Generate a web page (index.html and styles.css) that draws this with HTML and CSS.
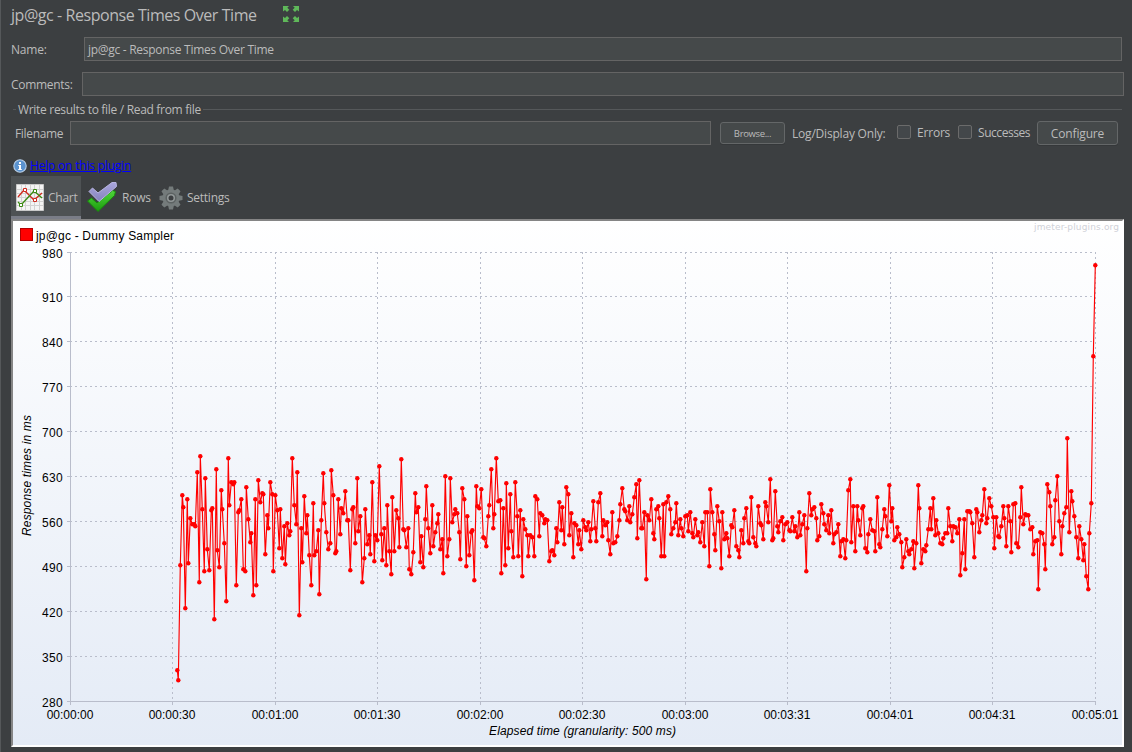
FILE: index.html
```
<!DOCTYPE html>
<html lang="en">
<head>
  <meta charset="UTF-8">
  <title>jp@gc - Response Times Over Time</title>
  <link rel="stylesheet" href="styles.css">
</head>
<body>
<div class="panel">
  <div class="title">
    <h1>jp@gc - Response Times Over Time</h1>
    <svg class="expand" width="18" height="18" viewBox="0 0 18 18">
      <g fill="#5fb85a">
        <path id="arrow" d="M1 1h6L5.300 2.700 7.300 4.700 5 7 3 5 1 6.500z"/>
        <use href="#arrow" transform="matrix(-1 0 0 1 18 0)"/>
        <use href="#arrow" transform="matrix(1 0 0 -1 0 18)"/>
        <use href="#arrow" transform="matrix(-1 0 0 -1 18 18)"/>
      </g>
    </svg>
  </div>

  <div class="row name">
    <label>Name:</label>
    <div class="field">jp@gc - Response Times Over Time</div>
  </div>
  <div class="row comments">
    <label>Comments:</label>
    <div class="field"></div>
  </div>

  <div class="legend"><span>Write results to file / Read from file</span></div>

  <div class="row file">
    <label>Filename</label>
    <div class="field"></div>
    <button class="browse">Browse...</button>
    <span class="only">Log/Display Only:</span>
    <i class="check"></i><span class="errors">Errors</span>
    <i class="check"></i><span class="successes">Successes</span>
    <button class="configure">Configure</button>
  </div>

  <div class="help">
    <svg width="14" height="14" viewBox="0 0 14 14">
      <circle cx="7" cy="7" r="6.200" fill="#5b93cf" stroke="#b9cfe6" stroke-width="1.100"/>
      <path d="M6 3h2v2H6zM5.300 6H8v4h.8v1H5.200v-1H6V7h-.7z" fill="#fff"/>
    </svg>
    <a href="#">Help on this plugin</a>
  </div>

  <div class="tabs">
    <div class="tab active">
      <svg width="28" height="28" viewBox="0 0 28 28">
        <path fill="#f4f4f4" stroke="#c9c9c9" d="M.5 1.500h27v26H.5z"/>
        <path fill="none" stroke="#d2d2d2" d="M5.500 2v25M9.500 2v25M14.500 2v25M18.500 2v25M23.500 2v25M1 6.500h26M1 10.500h26M1 14.500h26M1 18.500h26M1 22.500h26"/>
        <path fill="none" stroke="#cf2a1e" stroke-width="1.300" d="M2 14l6-7 10 10 8-7"/>
        <path fill="none" stroke="#3a8a12" stroke-width="1.300" d="M2 19l3 3L18 8l8 7"/>
        <path fill="#fff" stroke="#cf2a1e" d="M7.500 5.500h3v3h-3zM17.500 15.500h3v3h-3z"/>
        <path fill="#fff" stroke="#3a8a12" d="M3.500 20.500h3v3h-3zM17.500 6.500h3v3h-3z"/>
      </svg>
      <span>Chart</span>
    </div>
    <div class="tab rows">
      <svg width="32" height="32" viewBox="0 0 32 32">
        <defs>
          <linearGradient id="green" x1="0" y1="0" x2="0" y2="1">
            <stop offset="0" stop-color="#4fd63a"/><stop offset="1" stop-color="#1b9a0e"/>
          </linearGradient>
          <linearGradient id="violet" x1="0" y1="0" x2="0" y2="1">
            <stop offset="0" stop-color="#a9a6dc"/><stop offset="1" stop-color="#8582bd"/>
          </linearGradient>
        </defs>
        <path d="M1.500 20l4-3 5.500 5L26.500 9.500l3 1-1 4L12 30.500z" fill="url(#green)" stroke="#178a0c"/>
        <path d="M3 10.500L6.500 7l5.500 5L26 1.500h4l.5 4L13 20.500z" fill="url(#violet)" stroke="#b9b6e2"/>
      </svg>
      <span>Rows</span>
    </div>
    <div class="tab settings">
      <svg width="24" height="24" viewBox="-12 -12 24 24">
        <g fill="#747b7b">
          <path id="teeth" d="M-2-11.500h4L3-7h-6zM-2 11.500h4L3 7h-6z"/>
          <use href="#teeth" transform="rotate(45)"/>
          <use href="#teeth" transform="rotate(90)"/>
          <use href="#teeth" transform="rotate(135)"/>
          <circle r="8.500"/>
        </g>
        <circle r="4.800" fill="#929898" stroke="#5c6262" stroke-width="1.500"/>
        <circle r="2.500" fill="#3c3f41"/>
      </svg>
      <span>Settings</span>
    </div>
  </div>

  <div class="chart">
    <svg width="1110" height="524" viewBox="13 221 1110 524">
      <defs>
        <marker id="dot" markerUnits="userSpaceOnUse" markerWidth="6" markerHeight="6" refX="3" refY="3">
          <circle cx="3" cy="3" r="2.200" fill="#f00"/>
        </marker>
      </defs>

      <rect class="key" x="20.500" y="228.500" width="12" height="12"/>
      <text x="36" y="240" textLength="138">jp@gc - Dummy Sampler</text>
      <text class="mark" x="1034" y="230" textLength="85">jmeter-plugins.org</text>

      <path class="grid" d="M70 252.500H1095M70 296.500H1095M70 341.500H1095M70 386.500H1095M70 431.500H1095M70 476.500H1095M70 521.500H1095M70 566.500H1095M70 611.500H1095M70 656.500H1095"/>
      <path class="grid" d="M172.500 252V701M275.500 252V701M377.500 252V701M480.500 252V701M582.500 252V701M685.500 252V701M787.500 252V701M890.500 252V701M992.500 252V701M1095.500 252V701"/>
      <path class="axis" d="M70.500 252V705M67 701.500H1096M67 252.500h3M67 296.500h3M67 341.500h3M67 386.500h3M67 431.500h3M67 476.500h3M67 521.500h3M67 566.500h3M67 611.500h3M67 656.500h3M172.500 702v3M275.500 702v3M377.500 702v3M480.500 702v3M582.500 702v3M685.500 702v3M787.500 702v3M890.500 702v3M992.500 702v3M1095.500 702v3"/>

      <g class="ylabels">
        <text x="63" y="258">980</text>
        <text x="63" y="302">910</text>
        <text x="63" y="347">840</text>
        <text x="63" y="392">770</text>
        <text x="63" y="437">700</text>
        <text x="63" y="482">630</text>
        <text x="63" y="527">560</text>
        <text x="63" y="572">490</text>
        <text x="63" y="617">420</text>
        <text x="63" y="662">350</text>
        <text x="63" y="707">280</text>
      </g>
      <g class="xlabels">
        <text x="70" y="719">00:00:00</text>
        <text x="172" y="719">00:00:30</text>
        <text x="275" y="719">00:01:00</text>
        <text x="377" y="719">00:01:30</text>
        <text x="480" y="719">00:02:00</text>
        <text x="582" y="719">00:02:30</text>
        <text x="685" y="719">00:03:00</text>
        <text x="787" y="719">00:03:31</text>
        <text x="890" y="719">00:04:01</text>
        <text x="992" y="719">00:04:31</text>
        <text x="1095" y="719">00:05:01</text>
      </g>
      <text class="axis-title" x="489" y="735" textLength="187">Elapsed time (granularity: 500 ms)</text>
      <text class="axis-title" transform="translate(31 536) rotate(-90)" textLength="121">Response times in ms</text>

      <polyline class="series" transform="translate(.3 .3)" points="
        177,670 178,680 180,565 182,495 183,507 185,608 187,499 188,563 190,518 192,524 194,524 195,526
        197,472 199,582 200,456 202,509 204,571 205,478 207,549 209,570 211,510 212,508 214,619 216,469
        217,550 219,567 221,490 222,509 224,543 226,601 228,458 229,505 231,482 233,484 234,482 236,585
        238,512 239,510 241,499 243,569 245,571 246,487 248,519 250,542 251,533 253,595 255,499 256,585
        258,480 260,502 262,493 263,494 265,554 267,515 268,528 270,482 272,494 273,571 275,495 277,510
        279,548 280,509 282,558 284,526 285,564 287,523 289,535 290,531 292,458 294,505 296,524 297,472
        299,615 301,528 302,562 304,496 306,533 307,515 309,555 311,585 313,503 314,555 316,551 318,530
        319,594 321,520 323,473 324,503 326,532 328,549 330,543 331,470 333,495 335,553 336,551 338,499
        340,534 341,508 343,513 345,491 347,520 348,520 350,570 352,509 353,507 355,543 357,478 358,531
        360,516 362,582 364,558 365,509 367,544 369,535 370,554 372,482 374,561 375,535 377,540 379,466
        381,534 382,560 384,528 386,565 387,505 389,551 391,574 392,497 394,551 396,510 398,518 399,547
        401,459 403,529 404,530 406,547 408,528 409,569 411,574 413,552 415,493 416,512 418,507 420,562
        421,536 423,567 425,519 426,486 428,528 430,553 432,505 433,546 435,532 437,523 438,514 440,549
        442,539 443,573 445,476 447,556 449,539 450,478 452,522 454,514 455,509 457,513 459,532 460,559
        462,488 464,499 466,566 467,516 469,555 471,532 472,530 474,580 476,486 477,506 479,508 481,489
        483,537 484,538 486,546 488,516 489,505 491,469 493,528 494,514 496,458 498,501 500,500 501,573
        503,508 505,565 506,483 508,548 510,494 511,531 513,557 515,482 517,516 518,556 520,510 522,576
        523,519 525,529 527,535 528,556 530,535 532,537 534,556 535,496 537,499 539,536 540,513 542,515
        544,523 545,519 547,520 549,561 551,551 552,550 554,555 556,528 557,542 559,502 561,530 562,507
        564,544 566,487 568,494 569,535 571,513 573,557 574,523 576,525 578,544 579,530 581,549 583,520
        585,527 586,530 588,522 590,541 591,529 593,501 595,528 596,541 598,502 600,493 602,536 603,520
        605,525 607,522 608,540 610,554 612,512 613,543 615,542 617,536 619,520 620,504 622,488 624,509
        625,511 627,520 629,506 630,522 632,514 634,497 636,484 637,538 639,480 641,528 642,528 644,512
        646,579 647,515 649,520 651,499 653,533 654,539 656,509 658,506 659,518 661,556 663,504 664,556
        666,502 668,496 670,509 671,534 673,528 675,522 676,503 678,535 680,519 681,528 683,536 685,516
        687,515 688,531 690,512 692,533 693,537 695,519 697,535 698,532 700,542 702,522 704,546 705,512
        707,512 709,566 710,489 712,512 714,534 715,550 717,506 719,521 721,568 722,512 724,539 726,533
        727,538 729,556 731,525 732,527 734,510 736,546 738,550 739,557 741,530 743,543 744,518 746,508
        748,541 749,543 751,497 753,537 755,543 756,546 758,506 760,523 761,525 763,539 765,502 766,506
        768,522 770,479 772,540 773,538 775,491 777,526 778,532 780,521 782,517 783,540 785,524 787,522
        789,530 790,531 792,517 794,531 795,526 797,537 799,512 800,535 802,524 804,515 806,571 807,528
        809,493 811,515 812,509 814,507 816,518 817,540 819,536 821,504 823,513 824,524 826,530 828,515
        829,533 831,510 833,543 834,534 836,532 838,524 840,556 841,541 843,539 845,558 846,540 848,490
        850,479 851,542 853,506 855,551 857,506 858,520 860,535 862,508 863,506 865,548 867,552 868,534
        870,519 872,530 874,531 875,551 877,497 879,544 880,547 882,529 884,509 885,516 887,536 889,485
        891,521 892,508 894,540 896,537 897,527 899,534 901,542 902,567 904,557 906,539 908,551 909,554
        911,549 913,541 914,568 916,543 918,485 919,508 921,563 923,549 925,551 926,545 928,529 930,508
        931,529 933,498 935,535 936,520 938,533 940,543 942,544 943,538 945,533 947,533 948,508 950,526
        952,541 953,526 955,527 957,533 959,519 960,575 962,553 964,519 965,569 967,511 969,511 970,512
        972,523 974,557 976,509 977,512 979,532 981,520 982,515 984,489 986,523 987,518 989,498 991,506
        993,517 994,548 996,517 998,536 999,537 1001,526 1003,506 1004,518 1006,546 1008,506 1010,521 1011,552
        1013,504 1015,503 1016,543 1018,547 1020,517 1021,487 1023,524 1025,514 1026,515 1028,515 1030,529 1032,527
        1033,554 1035,541 1037,540 1038,589 1040,532 1042,533 1044,544 1045,569 1047,484 1049,492 1050,506 1052,544
        1054,537 1055,500 1057,476 1059,521 1061,554 1062,526 1064,513 1066,507 1067,438 1069,532 1071,491 1072,501
        1074,516 1076,537 1078,558 1079,526 1081,539 1083,560 1084,544 1086,576 1088,589 1089,533 1091,503 1093,356
        1095,265"/>
    </svg>
  </div>
</div>
</body>
</html>
```

FILE: styles.css
```
* {
  box-sizing: border-box;
}

body {
  margin: 0;
  background: #3c3f41;
  color: #bbb;
  font: 12px/16px "Open Sans", "Noto Sans", sans-serif;
  letter-spacing: -0.2px;
}

.panel {
  height: 752px;
  padding: 4px 8px 0 10px;
  border-left: 1px solid #55585a;
  overflow: hidden;
}

.title {
  display: flex;
  align-items: flex-start;
  height: 33px;
}

h1 {
  margin: 0;
  width: 271px;
  font-size: 16px;
  line-height: 23px;
  font-weight: normal;
  letter-spacing: -0.44px;
  white-space: nowrap;
}

.expand {
  margin-top: 1px;
}

.row {
  display: flex;
  align-items: center;
  height: 24px;
  white-space: nowrap;
}

.row label {
  padding-top: 2px;
}

.field {
  flex: 1;
  height: 24px;
  padding: 4px 3px;
  line-height: 16px;
  letter-spacing: -0.28px;
  background: #45494a;
  border: 1px solid #646464;
}

.name {
  margin-right: 2px;
}

.name label {
  width: 73px;
}

.comments {
  margin-top: 11px;
}

.comments label {
  width: 71px;
  letter-spacing: -0.3px;
}

.legend {
  display: flex;
  align-items: center;
  height: 16px;
  margin: 6px 2px 0;
  white-space: nowrap;
}

.legend::before,
.legend::after {
  content: "";
  width: 3px;
  height: 1px;
  margin-top: -1px;
  background: #55585a;
}

.legend::after {
  flex: 1;
}

.legend span {
  width: 187px;
  padding-left: 2px;
  letter-spacing: -0.31px;
}

.file {
  margin-top: 3px;
  padding: 0 6px 0 4px;
}

.file label {
  width: 55px;
  letter-spacing: -0.33px;
}

button {
  padding: 0;
  color: #bbb;
  font: inherit;
  letter-spacing: inherit;
  background: #45494a;
  border: 1px solid #646768;
  border-radius: 3px;
  box-shadow: 0 1px #35383a;
}

.browse {
  width: 65px;
  height: 22px;
  padding-top: 2px;
  margin: 0 7px 0 9px;
  font-size: 9.5px;
  letter-spacing: -0.35px;
}

.only {
  width: 105px;
  padding-top: 2px;
}

.check {
  width: 14px;
  height: 14px;
  margin: -2px 6px 0 0;
  border: 1px solid #6b6b6b;
  border-radius: 2px;
  background: #43474a;
}

.errors,
.successes {
  width: 41px;
}

.successes {
  width: 59px;
  letter-spacing: -0.45px;
}

.configure {
  width: 81px;
  height: 24px;
  padding-top: 2px;
  letter-spacing: -0.15px;
}

.help {
  display: flex;
  align-items: center;
  height: 16px;
  margin-top: 12px;
  padding-left: 2px;
}

.help svg {
  margin-top: 1px;
}

.help a {
  margin: 2px 0 0 3px;
  color: #00f;
}

.tabs {
  display: flex;
  height: 43px;
  margin-top: 3px;
}

.tab {
  display: flex;
  align-items: center;
  height: 43px;
  padding-left: 5px;
}

.tab span {
  margin: 1px 0 0 4px;
  letter-spacing: -0.25px;
}

.active {
  width: 70px;
  background: #4e5254;
  border-bottom: 3px solid #7a7d87;
}

.tab.active span {
  margin-top: 4px;
}

.active svg {
  margin-top: 1px;
}

.rows {
  width: 73px;
}

.rows svg {
  margin-bottom: 2px;
}

.chart {
  width: 1113px;
  height: 528px;
  border: 2px solid #fff;
  border-top-color: #858585;
  border-left-color: #858585;
  background: linear-gradient(#fff, #e4ebf6);
}

.chart svg {
  display: block;
}

.chart text {
  font: 12px "Liberation Sans", Arial, sans-serif;
  letter-spacing: 0;
  fill: #000;
}

.key {
  fill: #f00;
  stroke: #b00000;
}

.chart .mark {
  font: 9px "DejaVu Sans", sans-serif;
  fill: #cfd1d8;
}

.grid {
  fill: none;
  stroke: #b9bdcb;
  stroke-dasharray: 2 3;
}

.axis {
  fill: none;
  stroke: #b9bdcb;
}

.chart .ylabels text {
  text-anchor: end;
  letter-spacing: 0.3px;
}

.xlabels text {
  text-anchor: middle;
}

.chart .axis-title {
  font-style: italic;
}

.series {
  fill: none;
  stroke: #f00;
  stroke-width: 1.15;
  marker-start: url(#dot);
  marker-mid: url(#dot);
  marker-end: url(#dot);
}
```
